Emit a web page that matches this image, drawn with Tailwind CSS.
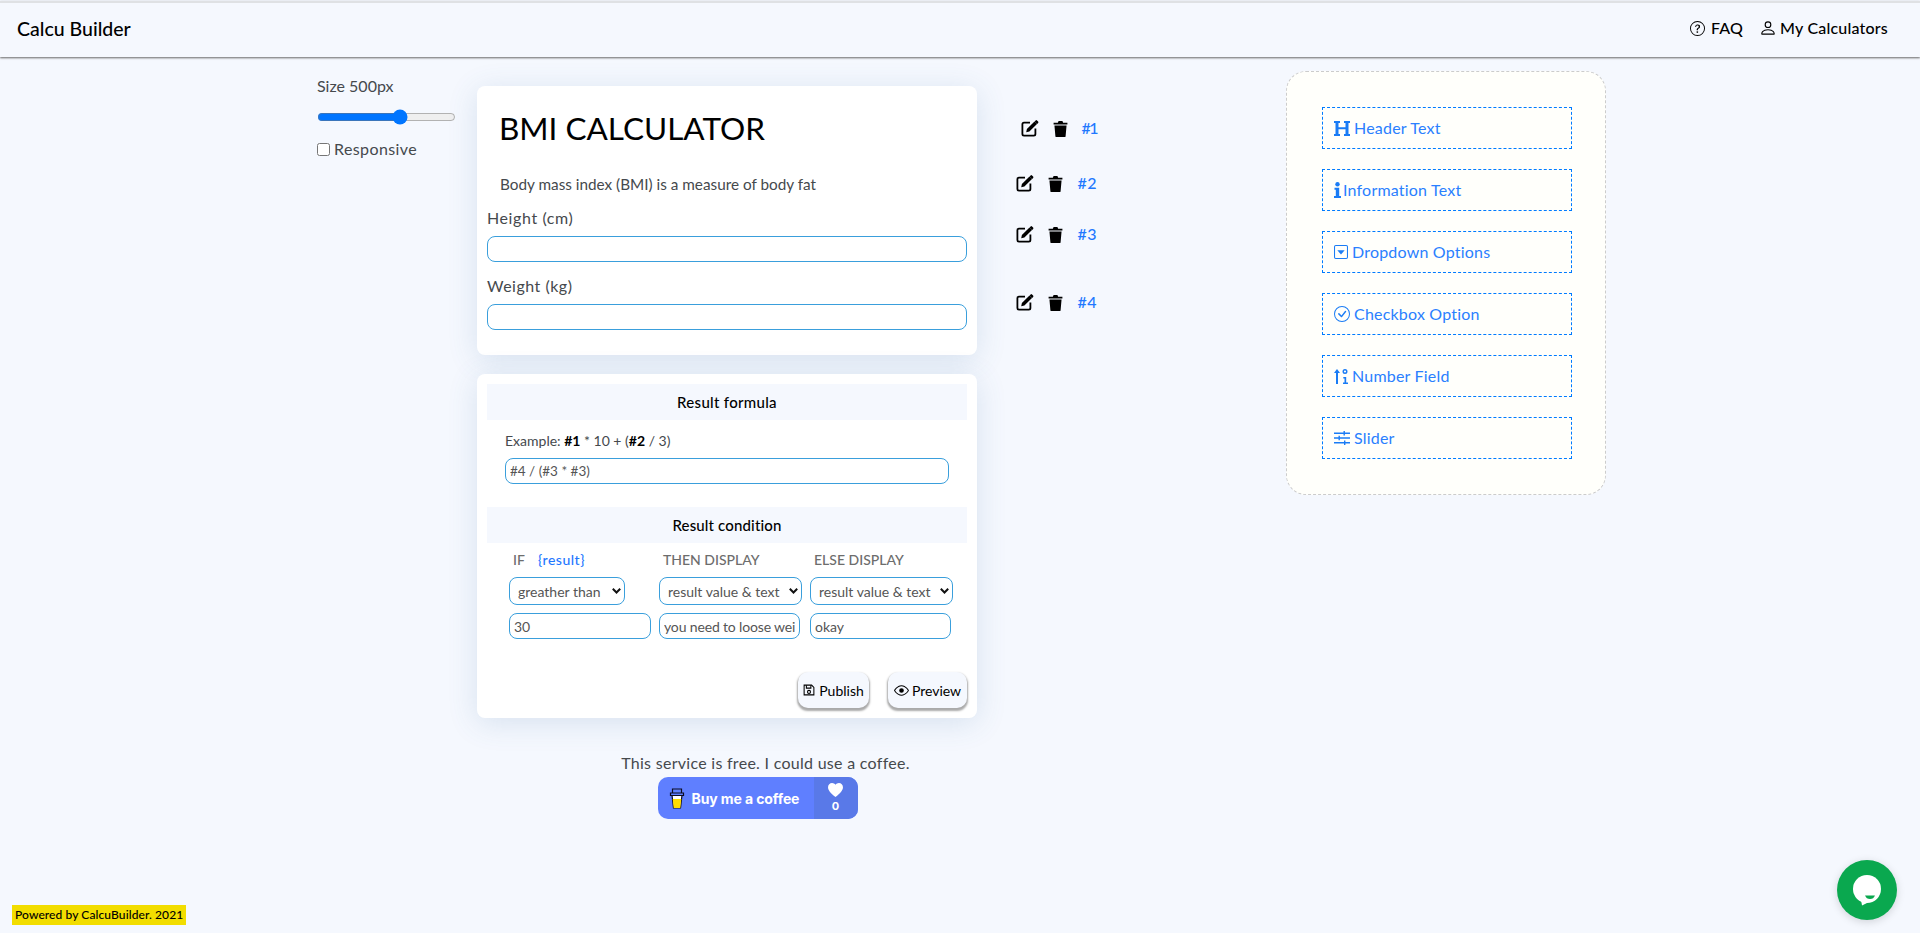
<!DOCTYPE html>
<html lang="en">
<head>
  <meta charset="UTF-8" />
  <title>Calcu Builder</title>
  <script src="https://cdn.jsdelivr.net/npm/@tailwindcss/browser@4"></script>
</head>
<body class="bg-[#f5f8fe] h-[933px] overflow-hidden relative font-['Lato',sans-serif] text-[#45494d]">
  <header class="mt-px h-[56px] border-t-2 border-[#dfe1e4] bg-[#f5f8fe] shadow-[0_1px_2px_#666] flex items-center justify-between pl-[17px] pr-[32px] pb-[2px] text-black">
    <span class="text-[19.500px] font-medium">Calcu Builder</span>
    <nav class="flex items-center text-[16px] tracking-[0.2px] font-medium mb-[2px]">
      <svg class="w-[15px] h-[15px] mr-[6px]" viewBox="0 0 16 16" fill="currentColor"><path d="M8 15A7 7 0 1 1 8 1a7 7 0 0 1 0 14zm0 1A8 8 0 1 0 8 0a8 8 0 0 0 0 16z"/><path d="M5.250 6.030a.24.24 0 0 0 .24.25h.83c.14 0 .25-.11.27-.25.09-.65.54-1.130 1.340-1.130.68 0 1.310.34 1.310 1.170 0 .64-.38.93-.97 1.380-.68.49-1.210 1.060-1.180 1.990v.22c0 .14.11.25.25.25h.82c.14 0 .25-.11.25-.25v-.11c0-.72.27-.93 1.010-1.490.61-.46 1.250-.98 1.250-2.050C11.070 4.510 9.790 3.800 8.390 3.800c-1.270 0-2.660.59-2.750 2.230zm1.550 5.720c0 .53.42.92 1 .92.6 0 1.020-.39 1.020-.92 0-.55-.42-.94-1.020-.94-.58 0-1 .39-1 .94z"/></svg>
      <span>FAQ</span>
      <svg class="w-[18px] h-[18px] ml-[16px] mr-[3px]" viewBox="0 0 16 16" fill="currentColor"><path d="M8 8a3 3 0 1 0 0-6 3 3 0 0 0 0 6zm2-3a2 2 0 1 1-4 0 2 2 0 0 1 4 0zm4 8c0 1-1 1-1 1H3s-1 0-1-1 1-4 6-4 6 3 6 4zm-1-.004c-.001-.246-.154-.986-.832-1.664C11.516 10.680 10.289 10 8 10s-3.516.68-4.168 1.332c-.678.678-.83 1.418-.832 1.664h10z"/></svg>
      <span>My Calculators</span>
    </nav>
  </header>

  <main class="flex items-start pl-[317px]">
    <!-- size controls -->
    <div class="w-[159px] mt-[17px] text-[16px]">
      <div class="h-6 leading-6">Size 500px</div>
      <input type="range" min="0" max="100" value="61" class="block w-[139px] h-4 m-0 mt-[11px]" />
      <label class="flex items-center h-6 mt-[12px] tracking-[0.4px]">
        <input type="checkbox" class="m-0 mr-[4px] w-[13px] h-[13px]" />
        <span>Responsive</span>
      </label>
    </div>

    <!-- builder -->
    <div class="w-[500px] ml-px mt-[29px]">
      <section class="bg-white rounded-lg shadow-[0_5px_30px_rgba(60,110,160,0.16)] px-[10px] pt-[22px] pb-[25px]">
        <h1 class="text-[31.500px] leading-10 font-normal text-black pl-[12px]">BMI CALCULATOR</h1>
        <p class="mt-[24px] pl-[13px] text-[15.300px] leading-6">Body mass index (BMI) is a measure of body fat</p>
        <label class="block mt-[10px] text-[16px] tracking-[0.6px] leading-6">Height (cm)</label>
        <input type="text" class="block w-full h-[26px] mt-[6px] border border-[#3a9fdc] rounded-lg" />
        <label class="block mt-[12px] text-[16px] tracking-[0.5px] leading-6">Weight (kg)</label>
        <input type="text" class="block w-full h-[26px] mt-[6px] border border-[#3a9fdc] rounded-lg" />
      </section>

      <section class="mt-[19px] bg-white rounded-lg shadow-[0_5px_30px_rgba(60,110,160,0.16)] px-[10px] pt-[10px] pb-[10px]">
        <h2 class="h-9 leading-9 bg-[#f5f8fe] text-center text-[15px] tracking-[0.3px] font-medium text-black">Result formula</h2>
        <div class="mt-[11px] ml-[18px] h-5 leading-5 text-[14px]">Example: <b class="text-black">#1</b> * 10 + (<b class="text-black">#2</b> / 3)</div>
        <input type="text" value="#4 / (#3 * #3)" class="block w-[444px] h-[26px] mt-[7px] ml-[18px] px-[4px] border border-[#3a9fdc] rounded-lg text-[13.500px] text-[#555]" />

        <h2 class="mt-[23px] h-9 leading-9 bg-[#f5f8fe] text-center text-[15px] tracking-[0.15px] font-medium text-black">Result condition</h2>
        <div class="grid grid-cols-[150px_151px_143px] ml-[22px] mt-[7px] text-[14px] text-[#6d6d6d] font-medium">
          <div class="h-5 leading-5 pl-[4px]">IF <span class="ml-[10px] tracking-[0.5px] text-[#1f78ff]">{result}</span></div>
          <div class="h-5 leading-5 pl-[4px]">THEN DISPLAY</div>
          <div class="h-5 leading-5 pl-[4px]">ELSE DISPLAY</div>
        </div>
        <div class="grid grid-cols-[150px_151px_143px] ml-[22px] mt-[7px] text-[14px] text-[#555]">
          <div class="relative w-[116px] h-[28px]">
            <select class="appearance-none w-full h-full pl-[8px] border border-[#3a9fdc] rounded-lg"><option>greather than</option></select>
            <svg class="absolute right-[4px] top-[11px] w-[9px] h-[6px] pointer-events-none" viewBox="0 0 9 6" fill="none" stroke="#111" stroke-width="2"><path d="M.8.8l3.700 3.700L8.200.8"/></svg>
          </div>
          <div class="relative w-[143px] h-[28px]">
            <select class="appearance-none w-full h-full pl-[8px] border border-[#3a9fdc] rounded-lg"><option>result value &amp; text</option></select>
            <svg class="absolute right-[4px] top-[11px] w-[9px] h-[6px] pointer-events-none" viewBox="0 0 9 6" fill="none" stroke="#111" stroke-width="2"><path d="M.8.8l3.700 3.700L8.200.8"/></svg>
          </div>
          <div class="relative w-[143px] h-[28px]">
            <select class="appearance-none w-full h-full pl-[8px] border border-[#3a9fdc] rounded-lg"><option>result value &amp; text</option></select>
            <svg class="absolute right-[4px] top-[11px] w-[9px] h-[6px] pointer-events-none" viewBox="0 0 9 6" fill="none" stroke="#111" stroke-width="2"><path d="M.8.8l3.700 3.700L8.200.8"/></svg>
          </div>
        </div>
        <div class="grid grid-cols-[150px_151px_143px] ml-[22px] mt-[8px] text-[14px] text-[#555]">
          <input type="text" value="30" class="w-[142px] h-[26px] px-[4px] border border-[#3a9fdc] rounded-lg" />
          <input type="text" value="you need to loose weight" class="w-[141px] h-[26px] px-[4px] border border-[#3a9fdc] rounded-lg tracking-[-0.15px]" />
          <input type="text" value="okay" class="w-[141px] h-[26px] px-[4px] border border-[#3a9fdc] rounded-lg" />
        </div>
        <div class="flex justify-end gap-[19px] mt-[33px] text-[14px] text-black">
          <button class="flex items-center justify-center w-[71px] h-9 rounded-[10px] bg-[#f5f8fe] shadow-[0_2px_2px_1px_#aaa]">
            <svg class="w-[12px] h-[12px] mr-[4px]" viewBox="0 0 16 16" fill="none" stroke="currentColor" stroke-width="1.400"><path d="M1.500 1.500h10l3 3v10h-13z"/><path d="M4.500 1.500v4h6v-4"/><circle cx="8" cy="10.500" r="2"/></svg>
            Publish
          </button>
          <button class="flex items-center justify-center w-[79px] h-9 rounded-[10px] bg-[#f5f8fe] shadow-[0_2px_2px_1px_#aaa]">
            <svg class="w-[15px] h-[15px] mr-[3px]" viewBox="0 0 16 16" fill="currentColor"><path d="M16 8s-3-5.500-8-5.500S0 8 0 8s3 5.500 8 5.500S16 8 16 8zM1.173 8a13 13 0 0 1 1.660-2.043C4.120 4.668 5.880 3.500 8 3.500s3.879 1.168 5.168 2.457A13 13 0 0 1 14.828 8a13 13 0 0 1-1.660 2.043C11.879 11.332 10.119 12.500 8 12.500s-3.879-1.168-5.168-2.457A13 13 0 0 1 1.172 8z"/><path d="M8 5.500a2.500 2.500 0 1 0 0 5 2.500 2.500 0 0 0 0-5z"/></svg>
            Preview
          </button>
        </div>
      </section>

      <div class="w-[501px] ml-[38px] mt-[33px] flex flex-col items-center">
        <p class="h-6 leading-6 text-[16px] tracking-[0.28px]">This service is free. I could use a coffee.</p>
        <a class="mt-[2px] mr-[16px] flex w-[200px] h-[42px] rounded-[10px] overflow-hidden bg-[#5f7fff] text-white font-['Inter',sans-serif] font-bold">
          <span class="flex-1 flex items-center pl-[11px] text-[14px] tracking-[-0.1px]">
            <svg class="w-[16px] h-[22px] mr-[7px]" viewBox="0 0 16 22"><path d="M3 8h10l-1.500 13h-7z" fill="#fff" stroke="#0d0c22" stroke-width="1.200"/><path d="M3.700 12h8.600l-1 9h-6.600z" fill="#ffdd00"/><path d="M1.500 6h13v2.500h-13zM3.500 2h9v4h-9z" fill="#5f7fff" stroke="#0d0c22" stroke-width="1.200"/></svg>
            Buy me a coffee
          </span>
          <span class="w-[44px] bg-[#5979e8] flex flex-col items-center justify-center text-[11px] leading-[13px]">
            <svg class="w-[15px] h-[14px]" viewBox="0 0 16 15" fill="#fff"><path d="M8 15C2 10 0 7.500 0 4.500 0 2 2 0 4.300 0 5.800 0 7.200.8 8 2c.8-1.200 2.200-2 3.700-2C14 0 16 2 16 4.500c0 3-2 5.500-8 10.500z"/></svg>
            <span class="mt-[3px]">0</span>
          </span>
        </a>
      </div>
    </div>

    <!-- field index -->
    <div class="w-[120px] mt-[29px] text-[16px] tracking-[0.5px] font-medium text-[#1f78ff]">
      <div class="flex items-center justify-end h-6 mt-[31px]">
        <svg class="w-[18px] h-[18px] mb-[2px] text-black" viewBox="0 0 18 18"><path d="M9 3.600H3A1.600 1.600 0 0 0 1.400 5.200V15A1.600 1.600 0 0 0 3 16.600h9.800a1.600 1.600 0 0 0 1.600-1.600V9.500" fill="none" stroke="currentColor" stroke-width="1.800"/><path d="M13.500 2.500l2.500 2.500-7.600 7.600-3.200.7.700-3.200zM14.600 1.400a1 1 0 0 1 1.400 0l1.100 1.100a1 1 0 0 1 0 1.400l-.9 1-2.500-2.500z" fill="currentColor"/></svg>
        <svg class="w-[15px] h-[17px] mb-[2px] ml-[14px] text-black" viewBox="0 0 14 16" fill="currentColor"><path d="M.5 2.500H4.500L5.200 1h3.600l.7 1.500h4v1.700H.5zM1.300 5.200h11.400l-.9 10a.9.9 0 0 1-.9.8H3.100a.9.9 0 0 1-.9-.8z"/></svg>
        <span class="ml-[13px] pb-[2px] tracking-[-1.500px]">#1</span>
      </div>
      <div class="flex items-center justify-end h-6 mt-[31px]">
        <svg class="w-[18px] h-[18px] mb-[2px] text-black" viewBox="0 0 18 18"><path d="M9 3.600H3A1.600 1.600 0 0 0 1.400 5.200V15A1.600 1.600 0 0 0 3 16.600h9.800a1.600 1.600 0 0 0 1.600-1.600V9.500" fill="none" stroke="currentColor" stroke-width="1.800"/><path d="M13.500 2.500l2.500 2.500-7.600 7.600-3.200.7.700-3.200zM14.600 1.400a1 1 0 0 1 1.400 0l1.100 1.100a1 1 0 0 1 0 1.400l-.9 1-2.500-2.500z" fill="currentColor"/></svg>
        <svg class="w-[15px] h-[17px] mb-[2px] ml-[14px] text-black" viewBox="0 0 14 16" fill="currentColor"><path d="M.5 2.500H4.500L5.200 1h3.600l.7 1.500h4v1.700H.5zM1.300 5.200h11.400l-.9 10a.9.9 0 0 1-.9.8H3.100a.9.9 0 0 1-.9-.8z"/></svg>
        <span class="ml-[14px] pb-[2px]">#2</span>
      </div>
      <div class="flex items-center justify-end h-6 mt-[27px]">
        <svg class="w-[18px] h-[18px] mb-[2px] text-black" viewBox="0 0 18 18"><path d="M9 3.600H3A1.600 1.600 0 0 0 1.400 5.200V15A1.600 1.600 0 0 0 3 16.600h9.800a1.600 1.600 0 0 0 1.600-1.600V9.500" fill="none" stroke="currentColor" stroke-width="1.800"/><path d="M13.500 2.500l2.500 2.500-7.600 7.600-3.200.7.700-3.200zM14.600 1.400a1 1 0 0 1 1.400 0l1.100 1.100a1 1 0 0 1 0 1.400l-.9 1-2.500-2.500z" fill="currentColor"/></svg>
        <svg class="w-[15px] h-[17px] mb-[2px] ml-[14px] text-black" viewBox="0 0 14 16" fill="currentColor"><path d="M.5 2.500H4.500L5.200 1h3.600l.7 1.500h4v1.700H.5zM1.300 5.200h11.400l-.9 10a.9.9 0 0 1-.9.8H3.100a.9.9 0 0 1-.9-.8z"/></svg>
        <span class="ml-[14px] pb-[2px]">#3</span>
      </div>
      <div class="flex items-center justify-end h-6 mt-[44px]">
        <svg class="w-[18px] h-[18px] mb-[2px] text-black" viewBox="0 0 18 18"><path d="M9 3.600H3A1.600 1.600 0 0 0 1.400 5.200V15A1.600 1.600 0 0 0 3 16.600h9.800a1.600 1.600 0 0 0 1.600-1.600V9.500" fill="none" stroke="currentColor" stroke-width="1.800"/><path d="M13.500 2.500l2.500 2.500-7.600 7.600-3.200.7.700-3.200zM14.600 1.400a1 1 0 0 1 1.400 0l1.100 1.100a1 1 0 0 1 0 1.400l-.9 1-2.500-2.500z" fill="currentColor"/></svg>
        <svg class="w-[15px] h-[17px] mb-[2px] ml-[14px] text-black" viewBox="0 0 14 16" fill="currentColor"><path d="M.5 2.500H4.500L5.200 1h3.600l.7 1.500h4v1.700H.5zM1.300 5.200h11.400l-.9 10a.9.9 0 0 1-.9.8H3.100a.9.9 0 0 1-.9-.8z"/></svg>
        <span class="ml-[14px] pb-[2px]">#4</span>
      </div>
    </div>

    <!-- field palette -->
    <aside class="ml-[189px] mt-[14px] w-[320px] h-[424px] bg-[#fffffb] border border-dashed border-[#cccccc] rounded-[20px] pl-[35px] pt-[35px] flex flex-col gap-[20px] text-[16px] tracking-[0.2px] text-[#2a80ff]">
      <div class="w-[250px] h-[42px] border border-dashed border-[#007bff] flex items-center pl-[11px]">
        <svg class="w-[16px] h-[15px] mr-[4px]" viewBox="0 0 16 15" fill="#1a7cf5"><path d="M0 0h6v2H4.500v4.300h7V2H10V0h6v2h-1.500v11H16v2h-6v-2h1.500V8.300h-7V13H6v2H0v-2h1.500V2H0z"/></svg>
        Header Text
      </div>
      <div class="w-[250px] h-[42px] border border-dashed border-[#007bff] flex items-center pl-[11px]">
        <svg class="w-[7px] h-[16px] mr-[2px]" viewBox="0 0 7 16" fill="#1a7cf5"><circle cx="3.500" cy="2.200" r="2.200"/><path d="M.5 5.800h4.700V14H7v2H0v-2h1.800V7.800H.5z"/></svg>
        Information Text
      </div>
      <div class="w-[250px] h-[42px] border border-dashed border-[#007bff] flex items-center pl-[11px]">
        <svg class="w-[14px] h-[14px] mr-[4px]" viewBox="0 0 16 16" fill="#1a7cf5"><path d="M14 0a2 2 0 0 1 2 2v12a2 2 0 0 1-2 2H2a2 2 0 0 1-2-2V2a2 2 0 0 1 2-2h12zM2 1.200a.8.8 0 0 0-.8.800v12a.8.8 0 0 0 .8.800h12a.8.8 0 0 0 .8-.8V2a.8.8 0 0 0-.8-.8z"/><path d="M3.800 6h8.400L8 10.800z"/></svg>
        Dropdown Options
      </div>
      <div class="w-[250px] h-[42px] border border-dashed border-[#007bff] flex items-center pl-[11px]">
        <svg class="w-[16px] h-[16px] mr-[4px]" viewBox="0 0 16 16" fill="#1a7cf5"><path d="M8 15A7 7 0 1 1 8 1a7 7 0 0 1 0 14zm0 1A8 8 0 1 0 8 0a8 8 0 0 0 0 16z"/><path d="M10.970 4.970a.235.235 0 0 0-.02.022L7.477 9.417 5.384 7.323a.75.75 0 0 0-1.060 1.060L6.970 11.030a.75.75 0 0 0 1.079-.020l3.992-4.990a.75.75 0 0 0-1.071-1.050z"/></svg>
        Checkbox Option
      </div>
      <div class="w-[250px] h-[42px] border border-dashed border-[#007bff] flex items-center pl-[11px]">
        <svg class="w-[14px] h-[15px] mr-[4px]" viewBox="0 0 14 15" fill="#1a7cf5"><path d="M3 0l3 4H4v11H2V4H0z"/><path d="M11 0a2.500 2.500 0 1 1 0 5 2.500 2.500 0 0 1 0-5zm0 1.400a1.100 1.100 0 1 0 0 2.200 1.100 1.100 0 0 0 0-2.200zM9.300 8h2.900v5.500H14V15H9v-1.500h1.500V9.500H9.300z"/></svg>
        Number Field
      </div>
      <div class="w-[250px] h-[42px] border border-dashed border-[#007bff] flex items-center pl-[11px]">
        <svg class="w-[16px] h-[14px] mr-[4px]" viewBox="0 0 16 14" fill="#1a7cf5"><path d="M0 1.500h16v1.400H0zM0 6.300h16v1.400H0zM0 11.100h16v1.400H0zM9.500 0h1.400v4.400H9.500zM4.500 4.800h1.400v4.400H4.500zM10 9.600h1.400V14H10z"/></svg>
        Slider
      </div>
    </aside>
  </main>

  <div class="absolute left-[12px] top-[905px] h-5 px-[3px] bg-[#f2dd00] text-[12px] tracking-[0.1px] leading-5 text-black font-medium">Powered by CalcuBuilder. 2021</div>

  <div class="absolute left-[1837px] top-[860px] w-[60px] h-[60px] rounded-full bg-[#0aa84f] shadow-[0_2px_8px_rgba(0,0,0,0.15)] flex items-center justify-center">
    <svg class="w-[30px] h-[32px]" viewBox="0 0 30 32"><circle cx="15" cy="15" r="14" fill="#fff"/><path d="M9 26l1 5.500 6-3z" fill="#fff"/><path d="M13 21.500h10c-1 2.500-2.500 3.500-5 3.500s-4-1-5-3.500z" fill="#0aa84f"/></svg>
  </div>
</body>
</html>
